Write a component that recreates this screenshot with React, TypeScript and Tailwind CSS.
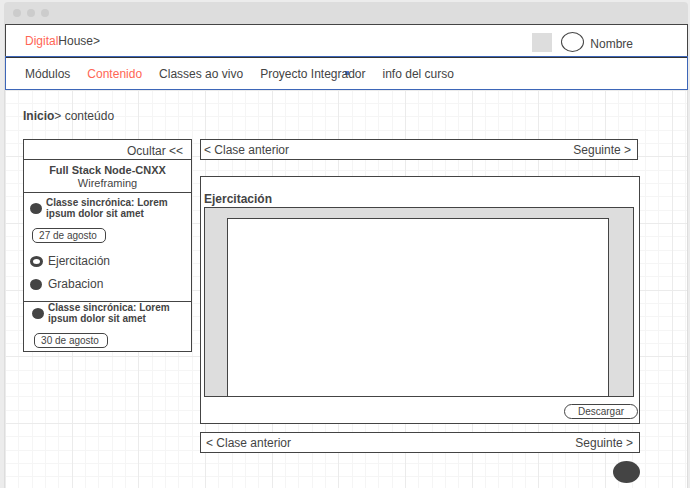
import React from "react";

const GRID_STEPS = [13, 27, 40, 53, 80, 93, 107, 120, 147, 160, 173, 187];
const GRID_MAJOR = [0, 67, 133];

const NAV = [
  { label: "Módulos" },
  { label: "Contenido", active: true },
  { label: "Classes ao vivo" },
  { label: "Proyecto Integrador" },
  { label: "info del curso" },
];

function GridPaper() {
  return (
    <svg className="absolute inset-0 h-full w-full" aria-hidden="true">
      <defs>
        <pattern id="grid" x="0" y="133" width="200" height="200" patternUnits="userSpaceOnUse">
          <g fill="#f5f5f5">
            {GRID_STEPS.map((n) => (
              <React.Fragment key={n}>
                <rect x={n} y="0" width="1" height="200" />
                <rect x="0" y={n} width="200" height="1" />
              </React.Fragment>
            ))}
          </g>
          <g fill="#ebebeb">
            {GRID_MAJOR.map((n) => (
              <React.Fragment key={n}>
                <rect x={n} y="0" width="1" height="200" />
                <rect x="0" y={n} width="200" height="1" />
              </React.Fragment>
            ))}
          </g>
        </pattern>
      </defs>
      <rect width="100%" height="100%" fill="url(#grid)" />
    </svg>
  );
}

function Dot({ hollow = false }: { hollow?: boolean }) {
  return (
    <span
      className={
        hollow
          ? "h-[11px] w-[13px] shrink-0 rounded-[50%] border-[3px] border-[#444] bg-white"
          : "h-[11px] w-3 shrink-0 rounded-[50%] bg-[#444]"
      }
    />
  );
}

function Lesson({ date }: { date: string }) {
  return (
    <>
      <div className="flex items-center gap-1">
        <Dot />
        <h3 className="text-[10px] leading-[11px] font-bold">
          Classe sincrónica: Lorem
          <br />
          ipsum dolor sit amet
        </h3>
      </div>
      <button className="mt-[9px] ml-0.5 block h-[15px] w-[74px] rounded-[5px] border border-[#444] bg-white pr-0.5 text-[10px] leading-[12px]">
        {date}
      </button>
    </>
  );
}

function Pager({ className }: { className: string }) {
  return (
    <nav
      aria-label="Clases"
      className={"flex h-[21px] items-center justify-between border border-[#444] bg-white " + className}
    >
      <a href="#anterior">&lt; Clase anterior</a>
      <a href="#seguinte">Seguinte &gt;</a>
    </nav>
  );
}

export default function App() {
  return (
    <div className="min-h-screen bg-[#ececec] pt-0.5 pr-0.5 pl-1 font-['Liberation_Sans',Arial,sans-serif] text-[12px] leading-4 text-[#444]">
      <div className="flex min-h-[calc(100vh-2px)] flex-col">
        <div className="flex h-[22px] items-center gap-1.5 rounded-t bg-[#ddd] pl-[9px]">
          <span className="size-2 rounded-full bg-[#ccc]" />
          <span className="size-2 rounded-full bg-[#ccc]" />
          <span className="size-2 rounded-full bg-[#ccc]" />
        </div>

        <div className="flex grow flex-col border-l border-[#ddd]">
          <header className="flex h-8 items-center justify-between border-x border-t border-[#444] bg-white pr-[54px] pl-[19px]">
            <a href="#inicio">
              <span className="text-[#ff6655]">Digital</span>House&gt;
            </a>
            <div className="flex items-center pt-[7px]">
              <span className="mr-[9px] mb-1 h-[19px] w-5 bg-[#ddd]" />
              <span className="mr-[6px] mb-1 h-5 w-[23px] rounded-[50%] border border-[#444]" />
              <span>Nombre</span>
            </div>
          </header>

          <nav
            aria-label="Principal"
            className="relative flex h-[34px] items-center gap-[17px] border border-[#3d66b8] bg-white pt-0.5 pl-[19px] shadow-[inset_0_1px_0_#333]"
          >
            <span className="absolute inset-0 m-auto size-1 bg-[#4b7bd8]" />
            {NAV.map((item) => (
              <a key={item.label} href="#nav" className={item.active ? "relative text-[#ff6655]" : "relative"}>
                {item.label}
              </a>
            ))}
          </nav>

          <div className="relative grow border-r border-[#ddd] bg-white">
            <GridPaper />
            <div className="relative pt-[18px] pr-[47px] pl-[18px]">
              <p>
                <a href="#inicio" className="font-bold">
                  Inicio
                </a>
                &gt; conteúdo
              </p>

              <div className="mt-[15px] flex items-start gap-2">
                <aside className="w-[169px] shrink-0 border border-[#444] bg-white">
                  <div className="flex h-5 items-center justify-end border-b border-[#444] pt-0.5 pr-2">
                    <button>Ocultar &lt;&lt;</button>
                  </div>
                  <div className="h-[33px] border-b border-[#444] pt-1 text-center text-[11px] leading-[13px]">
                    <h2 className="font-bold">Full Stack Node-CNXX</h2>
                    <p>Wireframing</p>
                  </div>
                  <section className="flex h-[109px] flex-col border-b border-[#444] pt-1 pl-1.5">
                    <Lesson date="27 de agosto" />
                    <a href="#ejercitacion" className="mt-[10px] flex items-center gap-[5px]">
                      <Dot hollow />
                      Ejercitación
                    </a>
                    <a href="#grabacion" className="mt-[7px] flex items-center gap-1.5">
                      <Dot />
                      Grabacion
                    </a>
                  </section>
                  <section className="flex h-[49px] flex-col pl-2">
                    <Lesson date="30 de agosto" />
                  </section>
                </aside>

                <main className="min-w-0 grow">
                  <Pager className="mr-0.5 pr-1.5 pl-[3px]" />

                  <section className="mt-4 border border-[#444] bg-white pt-3.5 pb-1">
                    <h1 className="pl-[3px] font-bold">Ejercitación</h1>
                    <div className="mr-[5px] ml-[3px] flex h-[190px] border border-[#444] bg-[#ddd] pt-2.5 pr-6 pl-[22px]">
                      <div className="grow border-x border-t border-[#444] bg-white" />
                    </div>
                    <button className="mt-[7px] mr-px ml-auto block h-[15px] w-[74px] rounded-full border border-[#444] bg-white text-[10px] leading-[13px]">
                      Descargar
                    </button>
                  </section>

                  <Pager className="mt-2 pr-1.5 pl-[5px]" />

                  <button
                    aria-label="Ayuda"
                    className="mt-2 ml-auto block h-[22px] w-[27px] rounded-[50%] bg-[#444]"
                  />
                </main>
              </div>
            </div>
          </div>
        </div>
      </div>
    </div>
  );
}
